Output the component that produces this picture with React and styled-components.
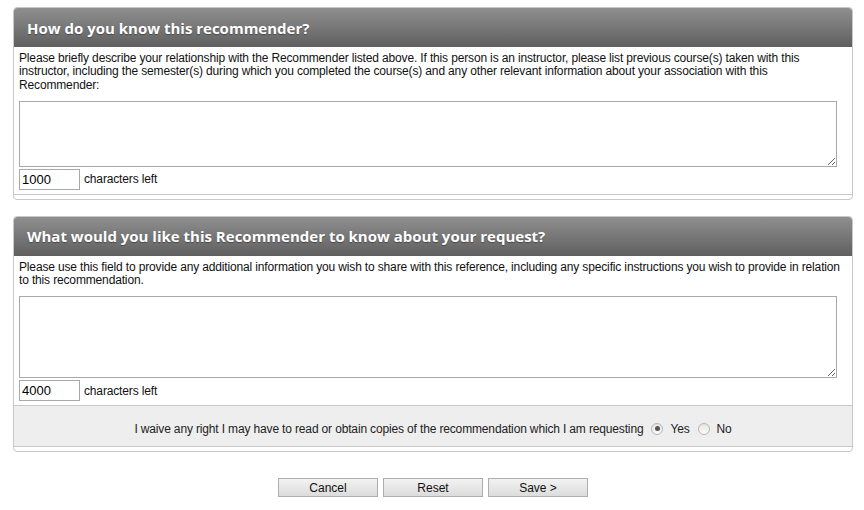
import React from 'react'
import styled, { createGlobalStyle } from 'styled-components';

const GlobalStyle = createGlobalStyle`
 html, body {
  margin: 0;
  padding: 0;
  background: #fff;
 }
 body {
  font-family: "Liberation Sans", Arial, sans-serif;
  font-size: 12px;
  letter-spacing: -0.15px;
  color: #222;
 }
`;

const RecommenderForm = () => {
 return (
  <Styled_Page>
   <GlobalStyle />
   {/* Section 1 */}
   <Styled_Panel>
    <Styled_Header>How do you know this recommender?</Styled_Header>
    <Styled_Body>
     <Styled_Intro>
      Please briefly describe your relationship with the Recommender listed above. If this person is an instructor, please list previous course(s) taken with this instructor, including the semester(s) during which you completed the course(s) and any other relevant information about your association with this Recommender:
     </Styled_Intro>
     <Styled_TextArea rows={4} $height={66} />
     <Styled_Counter>
      <Styled_CountBox type="text" defaultValue="1000" readOnly />
      <span>characters left</span>
     </Styled_Counter>
    </Styled_Body>
   </Styled_Panel>
   {/* End Section 1 */}
   {/* Section 2 */}
   <Styled_Panel>
    <Styled_Header>What would you like this Recommender to know about your request?</Styled_Header>
    <Styled_Body>
     <Styled_Intro>
      Please use this field to provide any additional information you wish to share with this reference, including any specific instructions you wish to provide in relation to this recommendation.
     </Styled_Intro>
     <Styled_TextArea rows={5} $height={82} />
     <Styled_Counter>
      <Styled_CountBox type="text" defaultValue="4000" readOnly />
      <span>characters left</span>
     </Styled_Counter>
    </Styled_Body>
    <Styled_Waiver>
     <span>I waive any right I may have to read or obtain copies of the recommendation which I am requesting</span>
     <Styled_Choice>
      <Styled_Radio type="radio" name="waive" defaultChecked />
      Yes
     </Styled_Choice>
     <Styled_Choice>
      <Styled_Radio type="radio" name="waive" />
      No
     </Styled_Choice>
    </Styled_Waiver>
   </Styled_Panel>
   {/* End Section 2 */}
   <Styled_Actions>
    <Styled_Button type="button">Cancel</Styled_Button>
    <Styled_Button type="button">Reset</Styled_Button>
    <Styled_Button type="button">Save &gt;</Styled_Button>
   </Styled_Actions>
  </Styled_Page>
 )
};

const Styled_Page = styled.div`
 width: 840px;
 padding: 7px 0 0 13px;
 display: flex;
 flex-direction: column;
 gap: 16px;
`;
const Styled_Panel = styled.div`
 border: 1px solid #c8c8c8;
 border-radius: 4px;
 padding-bottom: 4px;
 background: #fff;
 overflow: hidden;
`;
const Styled_Header = styled.h2`
 margin: 0;
 height: 39px;
 padding: 0 13px;
 display: flex;
 align-items: center;
 background: linear-gradient(#8f8f8f, #5f5f5f);
 color: #fff;
 font-family: "Open Sans", sans-serif;
 font-weight: 700;
 font-size: 15px;
 letter-spacing: 0;
 text-shadow: 0 1px 1px rgba(0, 0, 0, 0.35);
 border-radius: 3px 3px 0 0;
`;
const Styled_Body = styled.div`
 padding: 5px 5px 4px;
 border-bottom: 1px solid #c8c8c8;
 display: flex;
 flex-direction: column;
`;
const Styled_Intro = styled.p`
 margin: 0 0 9px;
 line-height: 13.3px;
 color: #111;
`;
const Styled_TextArea = styled.textarea`
 box-sizing: border-box;
 width: 818px;
 height: ${props => props.$height}px;
 border: 1px solid #a9a9a9;
 margin: 0;
 resize: vertical;
 font-family: "Liberation Sans", Arial, sans-serif;
`;
const Styled_Counter = styled.div`
 display: flex;
 align-items: center;
 gap: 4px;
 margin-top: 2px;
 color: #111;
`;
const Styled_CountBox = styled.input`
 box-sizing: border-box;
 width: 61px;
 height: 21px;
 border: 1px solid #a9a9a9;
 padding: 0 2px;
 margin: 0;
 font-family: "Liberation Sans", Arial, sans-serif;
 font-size: 13px;
 letter-spacing: 0;
 color: #000;
 outline: none;
`;
const Styled_Waiver = styled.div`
 height: 41px;
 padding-top: 5px;
 box-sizing: border-box;
 display: flex;
 align-items: center;
 justify-content: center;
 gap: 6px;
 background: #eee;
 border-bottom: 1px solid #c8c8c8;
 color: #222;
`;
const Styled_Choice = styled.label`
 display: inline-flex;
 align-items: center;
 gap: 7px;
 margin-left: 2px;
`;
const Styled_Radio = styled.input`
 appearance: none;
 margin: 0;
 width: 12px;
 height: 12px;
 border-radius: 50%;
 border: 1px solid #b4b4b4;
 background: linear-gradient(#e6e6e6, #fbfbfb);
 display: inline-grid;
 place-content: center;
 &:checked::before {
  content: "";
  width: 5px;
  height: 5px;
  border-radius: 50%;
  background: #555;
 }
`;
const Styled_Actions = styled.div`
 display: flex;
 justify-content: center;
 gap: 5px;
 padding-top: 10px;
`;
const Styled_Button = styled.button`
 width: 100px;
 height: 19px;
 padding: 0;
 border: 1px solid #adadad;
 background: linear-gradient(#f2f2f2, #dcdcdc);
 font-family: "Liberation Sans", Arial, sans-serif;
 font-size: 12px;
 color: #111;
 cursor: pointer;
`;

export default RecommenderForm
